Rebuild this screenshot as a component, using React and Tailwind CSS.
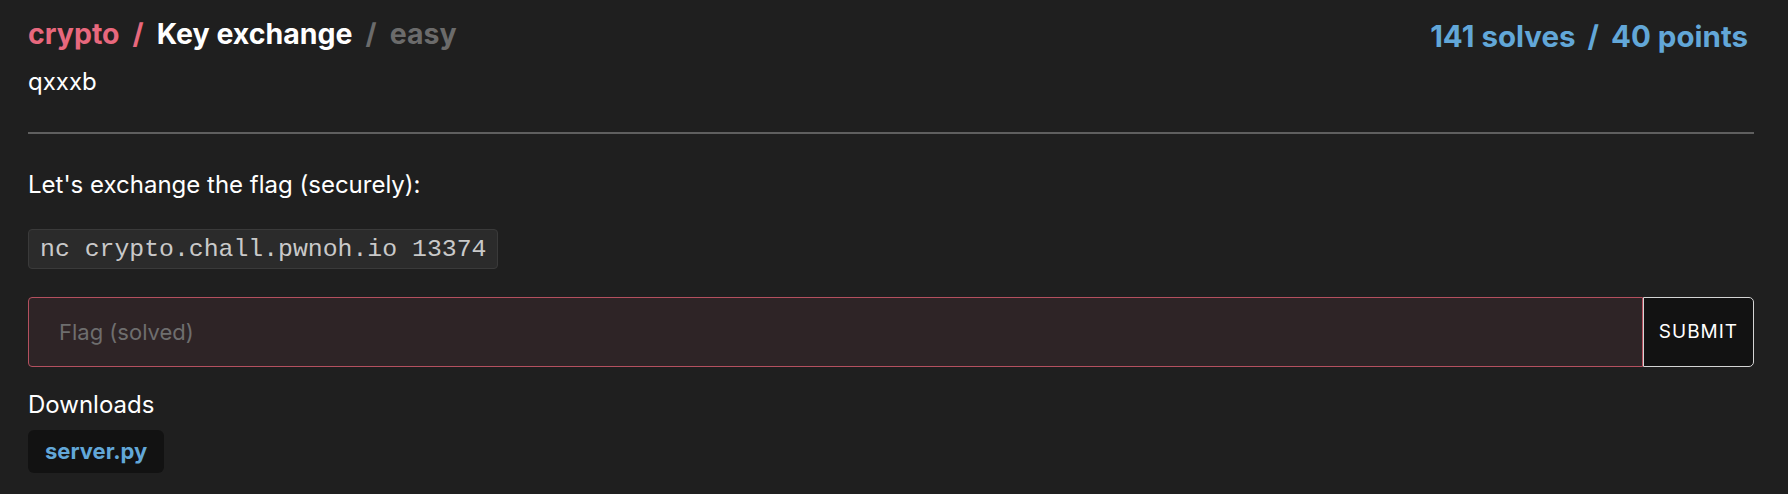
export default function App() {
  return (
    <div className="min-h-screen bg-[#1f1f1f] text-white font-['Inter',sans-serif]">
      <div className="pl-[28px] pr-[34px] pt-[14px]">
        {/* HEADER */}
        <header className="flex items-start justify-between">
          <div>
            <h1 className="flex items-center gap-[13px] text-[28.5px] font-bold leading-[40px]">
              <span className="text-[#e8687d]">crypto</span>
              <span className="text-[#e8687d]">/</span>
              <span>Key exchange</span>
              <span className="text-[#6b6b6b]">/</span>
              <span className="text-[#6b6b6b]">easy</span>
            </h1>
            <p className="mt-[12px] text-[24px] leading-[32px]">qxxxb</p>
          </div>

          <div className="mr-[6px] pt-[2px] flex items-center gap-[12px] text-[29.5px] font-bold leading-[40px] text-[#62a7d8]">
            <span>141 solves</span>
            <span>/</span>
            <span>40 points</span>
          </div>
        </header>

        <div className="mt-[34px] h-[2px] bg-[#5f5f5f]" />

        {/* BODY */}
        <p className="mt-[35px] text-[24px] leading-[32px]">
          Let's exchange the flag (securely):
        </p>

        <div className="mt-[28px] w-fit rounded-[4px] border border-[#3a3a3a] bg-[#2b2b2b] px-[11px] font-['Liberation_Mono',monospace] text-[24.8px] leading-[38px] text-[#c9c9c9]">
          nc crypto.chall.pwnoh.io 13374
        </div>

        {/* FLAG FORM */}
        <form className="mt-[28px] flex h-[70px]">
          <input
            type="text"
            placeholder="Flag (solved)"
            className="min-w-0 flex-1 rounded-l-[4px] border border-[#b4505f] bg-[#2e2426] px-[30px] text-[22px] text-white placeholder:text-[#6e6e6e] outline-none"
          />
          <button
            type="button"
            className="w-[111px] rounded-r-[5px] border border-[#d4d4d4] bg-[#121212] text-[19px] tracking-[1px] text-white"
          >
            SUBMIT
          </button>
        </form>

        {/* DOWNLOADS */}
        <h2 className="mt-[22px] text-[24px] leading-[32px]">Downloads</h2>
        <a
          href="#"
          className="mt-[9px] block w-fit rounded-[6px] bg-[#121212] px-[17px] text-[22px] font-bold leading-[43px] text-[#62a7d8]"
        >
          server.py
        </a>
      </div>
    </div>
  )
}
